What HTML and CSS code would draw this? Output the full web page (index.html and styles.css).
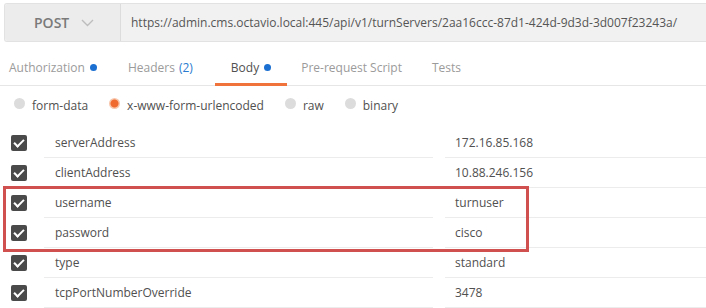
FILE: index.html
```html
<!DOCTYPE html>
<html>
<head>
<meta charset="utf-8">
<link rel="stylesheet" href="styles.css">
</head>
<body>
<div class="topbar">
  <div class="method">
    <span class="method-name">POST</span>
    <svg class="chev" width="13" height="8" viewBox="0 0 13 8"><path d="M1 1 L6.5 6.5 L12 1" fill="none" stroke="#bdbdbd" stroke-width="1.4"/></svg>
  </div>
  <div class="url">https://admin.cms.octavio.local:445/api/v1/turnServers/2aa16ccc-87d1-424d-9d3d-3d007f23243a/</div>
</div>

<div class="tabs">
  <div class="tab">Authorization <span class="dot"></span></div>
  <div class="tab">Headers <span class="count">(2)</span></div>
  <div class="tab active">Body <span class="dot"></span></div>
  <div class="tab">Pre-request Script</div>
  <div class="tab">Tests</div>
</div>

<div class="radios">
  <label class="radio"><span class="circle"></span>form-data</label>
  <label class="radio"><span class="circle on"></span>x-www-form-urlencoded</label>
  <label class="radio"><span class="circle"></span>raw</label>
  <label class="radio"><span class="circle"></span>binary</label>
</div>

<div class="table">
  <div class="row"><span class="cb"></span><div class="key">serverAddress</div><div class="val">172.16.85.168</div></div>
  <div class="row"><span class="cb"></span><div class="key">clientAddress</div><div class="val">10.88.246.156</div></div>
  <div class="hl">
    <div class="row"><span class="cb"></span><div class="key">username</div><div class="val">turnuser</div></div>
    <div class="row"><span class="cb"></span><div class="key">password</div><div class="val">cisco</div></div>
  </div>
  <div class="row"><span class="cb"></span><div class="key">type</div><div class="val">standard</div></div>
  <div class="row"><span class="cb"></span><div class="key">tcpPortNumberOverride</div><div class="val">3478</div></div>
</div>
</body>
</html>
```

FILE: styles.css
```css
* { box-sizing: border-box; }
html, body { margin: 0; padding: 0; background: #fff; }
body {
  font-family: "Open Sans", "DejaVu Sans", sans-serif;
  font-size: 12px;
  color: #505050;
  width: 706px;
  height: 308px;
  overflow: hidden;
}

.topbar {
  display: flex;
  height: 39px;
  margin: 3px 0 0 4px;
  border: 1px solid #e2e2e2;
  border-right: none;
  border-radius: 3px 0 0 3px;
  overflow: hidden;
}
.method {
  width: 116px;
  flex: none;
  background: #ececec;
  display: flex;
  align-items: center;
  padding-left: 29px;
  border-right: 1px solid #dcdcdc;
}
.method-name {
  font-size: 14px;
  font-weight: 600;
  color: #7a7a7a;
}
.chev { margin-left: 12px; }
.url {
  flex: 1;
  background: #f1f1f1;
  display: flex;
  align-items: center;
  padding-left: 10px;
  color: #555;
  white-space: nowrap;
}

.tabs {
  display: flex;
  height: 44px;
  border-bottom: 1px solid #e6e6e6;
}
.tab {
  display: flex;
  align-items: center;
  padding: 10px 16px 0;
  color: #9b9b9b;
  white-space: nowrap;
  border-bottom: 3px solid transparent;
  margin-bottom: -1px;
}
.tab:first-child { padding-left: 9px; padding-right: 15px; }
.tab:nth-child(2) { padding-right: 22px; }
.tab.active {
  color: #505050;
  border-bottom-color: #f0733b;
}
.tab:nth-child(4) { padding-left: 14px; padding-right: 14px; }
.dot {
  width: 7px;
  height: 7px;
  border-radius: 50%;
  background: #1a6fd1;
  margin-left: 5px;
}
.count { color: #2b7bd0; margin-left: 4px; }

.radios {
  display: flex;
  align-items: center;
  height: 38px;
  padding-left: 14px;
}
.radio {
  display: flex;
  align-items: center;
  margin-right: 21px;
  color: #505050;
}
.circle {
  width: 11px;
  height: 11px;
  border-radius: 50%;
  background: #dcdcdc;
  margin-right: 7px;
  position: relative;
  top: -2px;
}
.circle.on {
  background: radial-gradient(circle, #ef6a2f 0 3.5px, #f7c6ab 4.5px);
}

.table { padding-top: 4px; }
.row {
  display: flex;
  height: 30px;
  align-items: stretch;
}
.cb {
  flex: none;
  width: 16px;
  height: 16px;
  margin: 7px 17px 0 11px;
  background: #4a4a4a;
  border-radius: 2px;
  position: relative;
}
.cb::after {
  content: "";
  position: absolute;
  left: 5px;
  top: 2px;
  width: 4px;
  height: 8px;
  border: solid #fff;
  border-width: 0 2px 2px 0;
  transform: rotate(45deg);
}
.key {
  width: 389px;
  flex: none;
  padding-left: 11px;
  display: flex;
  align-items: center;
  border-bottom: 1px solid #ececec;
  margin-right: 12px;
}
.val {
  flex: 1;
  padding-left: 10px;
  display: flex;
  align-items: center;
  border-bottom: 1px solid #ececec;
}
.hl { position: relative; }
.hl::after {
  content: "";
  position: absolute;
  left: 3px;
  top: -2px;
  width: 520px;
  height: 60px;
  border: 3px solid #d0504f;
  pointer-events: none;
}
```
